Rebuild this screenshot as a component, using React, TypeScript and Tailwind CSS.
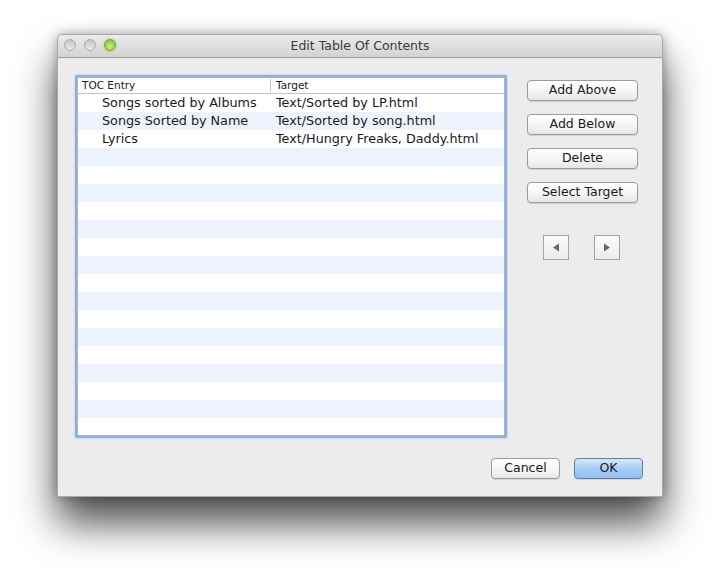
import React from 'react'

const entries = [
    { name: 'Songs sorted by Albums', target: 'Text/Sorted by LP.html' },
    { name: 'Songs Sorted by Name', target: 'Text/Sorted by song.html' },
    { name: 'Lyrics', target: 'Text/Hungry Freaks, Daddy.html' },
]

const font = { fontFamily: '"DejaVu Sans", "Liberation Sans", sans-serif' }

function AquaButton({ label, primary = false, className = '' }: { label: string; primary?: boolean; className?: string }) {
    return (
        <button
            className={
                `h-[21px] rounded-[4px] border text-[12.5px] leading-none text-[#1a1a1a] shadow-[0_1px_1px_rgba(0,0,0,0.12)] ${primary
                    ? 'border-[#5f7fae] bg-gradient-to-b from-[#d6e8fa] via-[#a9cdf3] to-[#8fc0f2]'
                    : 'border-[#9b9b9b] bg-gradient-to-b from-[#ffffff] via-[#f6f6f6] to-[#e6e6e6]'} ${className}`
            }
        >
            {label}
        </button>
    )
}

function ArrowButton({ dir }: { dir: 'left' | 'right' }) {
    return (
        <button className="w-[26px] h-[25px] border border-[#a2a2a2] bg-gradient-to-b from-[#fbfbfb] to-[#ececec] flex items-center justify-center">
            <svg width="8" height="9" viewBox="0 0 8 9">
                {dir === 'left'
                    ? <polygon points="7,0.5 7,8.5 1,4.5" fill="#666" />
                    : <polygon points="1,0.5 1,8.5 7,4.5" fill="#666" />}
            </svg>
        </button>
    )
}

export default function App() {
    const rows = Array.from({ length: 19 }, (_, i) => entries[i] ?? null)

    return (
        <div className="w-[720px] h-[576px] bg-white overflow-hidden pt-[34px] pl-[57px]" style={font}>
            <div className="w-[606px] h-[463px] flex flex-col rounded-t-[5px] bg-[#ececec] border border-[#a8a8a8] shadow-[0_26px_40px_rgba(0,0,0,0.7),0_0_12px_rgba(0,0,0,0.3)]">
                {/* Title bar */}
                <div className="h-[23px] shrink-0 relative flex items-center justify-center rounded-t-[5px] bg-gradient-to-b from-[#ececec] to-[#d2d2d2] border-b border-[#9c9c9c]">
                    <div className="absolute left-[6px] top-[4px] flex gap-[8px]">
                        <div className="w-[12px] h-[12px] rounded-full border border-[#a9a9a9] bg-gradient-to-b from-[#c4c4c4] to-[#ececec]" />
                        <div className="w-[12px] h-[12px] rounded-full border border-[#a9a9a9] bg-gradient-to-b from-[#c4c4c4] to-[#ececec]" />
                        <div className="w-[12px] h-[12px] rounded-full border border-[#7aa33e] bg-[radial-gradient(circle_at_50%_65%,#c6f07a,#78b82c)] shadow-[0_0_3px_rgba(120,190,40,0.6)]" />
                    </div>
                    <span className="text-[12.5px] text-[#3a3a3a]">Edit Table Of Contents</span>
                </div>

                {/* Body */}
                <div className="flex-1 relative">
                    <div className="flex pl-[17px] pt-[17px]">
                        {/* Table */}
                        <div className="w-[432px] h-[363px] rounded-[2px] border-[2px] border-[#8fb0dc] shadow-[0_0_2px_rgba(90,140,210,0.6)] bg-white overflow-hidden">
                            <div className="h-full border border-[#a9b6c8] overflow-hidden">
                                <div className="h-[16px] flex items-center border-b border-[#c4c4c4] bg-white text-[10.5px] text-[#1a1a1a]">
                                    <div className="w-[193px] pl-[4px] border-r border-[#c8c8c8] h-[13px] flex items-center">TOC Entry</div>
                                    <div className="pl-[5px]">Target</div>
                                </div>
                                {rows.map((r, i) => (
                                    <div
                                        key={i}
                                        className={`h-[18px] flex items-center text-[12.75px] text-[#1a1a1a] ${i % 2 === 1 ? 'bg-[#edf3fe]' : 'bg-white'}`}
                                    >
                                        {r && (
                                            <>
                                                <div className="w-[194px] pl-[24px] whitespace-nowrap">{r.name}</div>
                                                <div className="pl-[4px] whitespace-nowrap">{r.target}</div>
                                            </>
                                        )}
                                    </div>
                                ))}
                            </div>
                        </div>

                        {/* Side buttons */}
                        <div className="ml-[20px] pt-[5px] flex flex-col">
                            <div className="flex flex-col gap-[13px]">
                                <AquaButton label="Add Above" className="w-[111px]" />
                                <AquaButton label="Add Below" className="w-[111px]" />
                                <AquaButton label="Delete" className="w-[111px]" />
                                <AquaButton label="Select Target" className="w-[111px]" />
                            </div>
                            <div className="mt-[32px] pl-[16px] flex gap-[25px]">
                                <ArrowButton dir="left" />
                                <ArrowButton dir="right" />
                            </div>
                        </div>
                    </div>

                    {/* Bottom buttons */}
                    <div className="flex justify-end gap-[14px] pr-[19px] mt-[20px]">
                        <AquaButton label="Cancel" className="w-[69px]" />
                        <AquaButton label="OK" primary className="w-[69px]" />
                    </div>
                </div>
            </div>
        </div>
    )
}
